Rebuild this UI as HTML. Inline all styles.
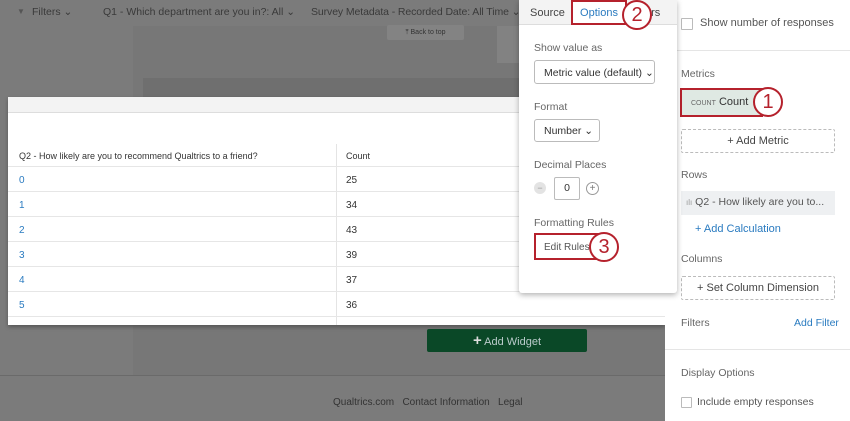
<!DOCTYPE html>
<html><head><style>
*{box-sizing:border-box;margin:0;padding:0}
body{width:850px;height:421px;overflow:hidden;background:#7b7b7b;font-family:"Liberation Sans",sans-serif;position:relative;font-size:11px;color:#333}
.a{position:absolute}
.top{left:0;top:0;width:665px;height:26px;color:#3a3a3a;font-size:10.5px}
.card{left:8px;top:97px;width:657px;height:228px;background:#fff;box-shadow:0 2px 4px rgba(0,0,0,.3)}
.row{position:absolute;left:0;width:657px;height:25px;border-bottom:1px solid #e6e6e6;font-size:10px}
.row span{position:absolute;top:8px}
.pop{left:519px;top:0;width:158px;height:293px;background:#fff;box-shadow:0 2px 6px rgba(0,0,0,.3);border-radius:0 0 3px 3px}
.panel{left:665px;top:0;width:185px;height:421px;background:#fff;color:#555}
.lbl{color:#666;font-size:10.5px}
.red{border:2px solid #b5212c}
.circ{width:30px;height:30px;border-radius:50%;border:2px solid #b5212c;background:#fff;color:#b5212c;font-size:20px;text-align:center;line-height:26px}
.dash{border:1px dashed #bbb;border-radius:2px;text-align:center;color:#444;font-size:11px}
.box{border:1px solid #bbb;border-radius:3px;background:#fff}
</style></head><body>
<div class="a" style="left:133px;top:26px;width:532px;height:350px;background:#777"></div>
<div class="a" style="left:143px;top:78px;width:522px;height:20px;background:#6f6f6f"></div>
<div class="a" style="left:0;top:375px;width:665px;height:1px;background:#6a6a6a"></div>
<div class="a" style="left:387px;top:25px;width:77px;height:15px;background:#838383;border-radius:2px;font-size:7px;color:#333;text-align:center;line-height:15px">⤒ Back to top</div>
<div class="a" style="left:497px;top:26px;width:22px;height:37px;background:#828282"></div>
<div class="a top">
<span class="a" style="left:17px;top:7px;font-size:8px;color:#555">▼</span>
<span class="a" style="left:32px;top:6px">Filters ⌄</span>
<span class="a" style="left:103px;top:6px">Q1 - Which department are you in?: All ⌄</span>
<span class="a" style="left:311px;top:6px;letter-spacing:-0.1px">Survey Metadata - Recorded Date: All Time ⌄</span>
</div>
<div class="a card">
<div class="a" style="left:0;top:0;width:657px;height:16px;background:#f3f3f3;border-bottom:1px solid #ddd"></div>
<div class="a" style="left:328px;top:47px;width:1px;height:181px;background:#e4e4e4"></div>
<div class="row" style="top:46px;height:24px"><span style="left:11px;font-size:9px">Q2 - How likely are you to recommend Qualtrics to a friend?</span><span style="left:338px;font-size:9px">Count</span></div>
<div class="row" style="top:70px"><span style="left:11px;color:#2a7bc0">0</span><span style="left:338px">25</span></div>
<div class="row" style="top:95px"><span style="left:11px;color:#2a7bc0">1</span><span style="left:338px">34</span></div>
<div class="row" style="top:120px"><span style="left:11px;color:#2a7bc0">2</span><span style="left:338px">43</span></div>
<div class="row" style="top:145px"><span style="left:11px;color:#2a7bc0">3</span><span style="left:338px">39</span></div>
<div class="row" style="top:170px"><span style="left:11px;color:#2a7bc0">4</span><span style="left:338px">37</span></div>
<div class="row" style="top:195px"><span style="left:11px;color:#2a7bc0">5</span><span style="left:338px">36</span></div>
</div>
<div class="a" style="left:427px;top:329px;width:160px;height:23px;background:#0a4827;border-radius:2px;color:#bcc;font-size:11px;text-align:center;line-height:23px"><b style="font-size:15px;color:#ddd">+</b> Add Widget</div>
<div class="a" style="left:333px;top:397px;font-size:10px;color:#333">Qualtrics.com &nbsp; Contact Information &nbsp; Legal</div>

<div class="a panel">
<div class="a box" style="left:16px;top:18px;width:12px;height:12px;border-radius:1px"></div>
<div class="a" style="left:35px;top:17px;font-size:11px">Show number of responses</div>
<div class="a" style="left:0;top:50px;width:185px;height:1px;background:#e5e5e5"></div>
<div class="a lbl" style="left:16px;top:68px">Metrics</div>
<div class="a red" style="left:15px;top:88px;width:83px;height:29px;background:#dfe9e3;padding:6px 0 0 9px;font-size:11px;color:#333"><span style="font-size:7px;color:#666">COUNT</span> Count</div>
<div class="a dash" style="left:16px;top:129px;width:154px;height:24px;line-height:22px">+ Add Metric</div>
<div class="a lbl" style="left:16px;top:169px">Rows</div>
<div class="a" style="left:16px;top:191px;width:154px;height:24px;background:#eef0f2;font-size:10.5px;padding:5px 0 0 5px"><span style="color:#999;font-size:8px">ılı</span> Q2 - How likely are you to...</div>
<div class="a" style="left:30px;top:223px;color:#2a7bc0;font-size:11px">+ Add Calculation</div>
<div class="a lbl" style="left:16px;top:253px">Columns</div>
<div class="a dash" style="left:16px;top:276px;width:154px;height:24px;line-height:22px">+ Set Column Dimension</div>
<div class="a lbl" style="left:16px;top:317px">Filters</div>
<div class="a" style="left:129px;top:317px;color:#2a7bc0;font-size:10.5px">Add Filter</div>
<div class="a" style="left:0;top:349px;width:185px;height:1px;background:#e5e5e5"></div>
<div class="a lbl" style="left:16px;top:367px">Display Options</div>
<div class="a box" style="left:16px;top:397px;width:11px;height:11px;border-radius:1px"></div>
<div class="a" style="left:32px;top:396px;font-size:10.5px">Include empty responses</div>
</div>

<div class="a pop">
<div class="a" style="left:0;top:0;width:158px;height:25px;background:#f3f3f3;border-bottom:1px solid #ddd"></div>
<div class="a" style="left:11px;top:7px;font-size:11px;color:#444">Source</div>
<div class="a red" style="left:52px;top:0;width:56px;height:25px;background:#fff;color:#2a7bc0;font-size:11px;text-align:center;padding-top:5px">Options</div>
<div class="a" style="left:126px;top:7px;font-size:11px;color:#444">ers</div>
<div class="a lbl" style="left:15px;top:42px">Show value as</div>
<div class="a box" style="left:15px;top:60px;width:121px;height:24px;padding:6px 0 0 9px;font-size:10.5px">Metric value (default) ⌄</div>
<div class="a lbl" style="left:15px;top:101px">Format</div>
<div class="a box" style="left:15px;top:119px;width:66px;height:23px;padding:5px 0 0 9px;font-size:10.5px">Number ⌄</div>
<div class="a lbl" style="left:15px;top:159px">Decimal Places</div>
<div class="a" style="left:15px;top:182px;width:12px;height:12px;border-radius:50%;background:#e3e3e3;font-size:9px;text-align:center;line-height:12px;color:#999">−</div>
<div class="a box" style="left:35px;top:177px;width:26px;height:23px;text-align:center;line-height:21px;font-size:10.5px;border-radius:2px">0</div>
<div class="a" style="left:67px;top:182px;width:13px;height:13px;border-radius:50%;border:1px solid #999;font-size:10px;text-align:center;line-height:11px;color:#777">+</div>
<div class="a lbl" style="left:15px;top:217px">Formatting Rules</div>
<div class="a red" style="left:15px;top:233px;width:70px;height:27px;padding:7px 0 0 8px;font-size:10px;color:#555">Edit Rules</div>
</div>

<div class="a circ" style="left:622px;top:0">2</div>
<div class="a circ" style="left:589px;top:232px">3</div>
<div class="a circ" style="left:753px;top:87px">1</div>
</body></html>
